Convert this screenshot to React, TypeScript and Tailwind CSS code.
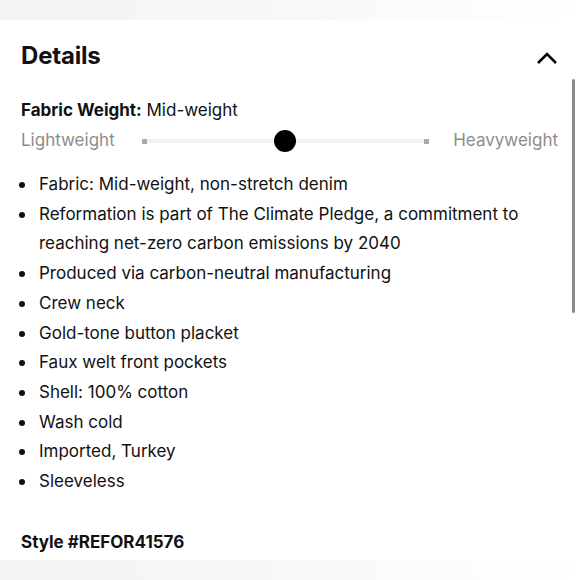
import React from "react";

const items: string[] = [
  "Fabric: Mid-weight, non-stretch denim",
  "Reformation is part of The Climate Pledge, a commitment to reaching net-zero carbon emissions by 2040",
  "Produced via carbon-neutral manufacturing",
  "Crew neck",
  "Gold-tone button placket",
  "Faux welt front pockets",
  "Shell: 100% cotton",
  "Wash cold",
  "Imported, Turkey",
  "Sleeveless",
];

export default function App() {
  return (
    <div
      className="relative w-[580px] h-[580px] overflow-hidden bg-white text-[#111]"
      style={{ fontFamily: "Inter, 'Liberation Sans', sans-serif" }}
    >
      <div className="h-[20px] w-full bg-gradient-to-r from-[#f3f3f3] via-[#f8f8f8] to-white" />
      <div className="pl-[21px] pr-[22px]">
        <div className="flex items-center justify-between mt-[22px] h-[28px]">
          <h2 className="text-[24px] font-bold tracking-[-0.2px]">Details</h2>
          <svg width="22" height="14" viewBox="0 0 22 14" className="mt-[4px]">
            <path d="M2 12 L11 3 L20 12" fill="none" stroke="#000" strokeWidth="2.6" />
          </svg>
        </div>
        <div className="mt-[28px] text-[17px] leading-[24px]">
          <span className="font-bold">Fabric Weight:</span> Mid-weight
        </div>
        <div className="mt-[7px] flex items-center h-[24px] text-[17px] text-[#8c8c8c]">
          <span className="w-[121px]">Lightweight</span>
          <div className="relative w-[287px] h-[4px] bg-[#f2f2f2]">
            <div className="absolute left-0 top-[-0.5px] w-[5px] h-[5px] bg-[#aaa]" />
            <div className="absolute right-0 top-[-0.5px] w-[5px] h-[5px] bg-[#aaa]" />
            <div className="absolute left-[132px] top-[-9px] w-[22px] h-[22px] rounded-full bg-black" />
          </div>
          <span className="ml-auto">Heavyweight</span>
        </div>
        <ul className="mt-[17px] text-[17px] leading-[29.7px]">
          {items.map((t) => (
            <li key={t} className="flex">
              <span className="w-[18px] shrink-0 flex items-start pt-[12px]">
                <span className="block w-[6px] h-[6px] rounded-full bg-[#111] ml-[-2px]" />
              </span>
              <span>{t}</span>
            </li>
          ))}
        </ul>
        <div className="mt-[33px] text-[17px] font-bold">Style #REFOR41576</div>
      </div>
      <div className="absolute left-0 bottom-0 h-[20px] w-full bg-gradient-to-r from-[#f3f3f3] via-[#f8f8f8] to-white" />
      <div className="absolute left-[572px] top-[79px] w-[3px] h-[234px] rounded-full bg-[#8a8a8a]" />
    </div>
  );
}
